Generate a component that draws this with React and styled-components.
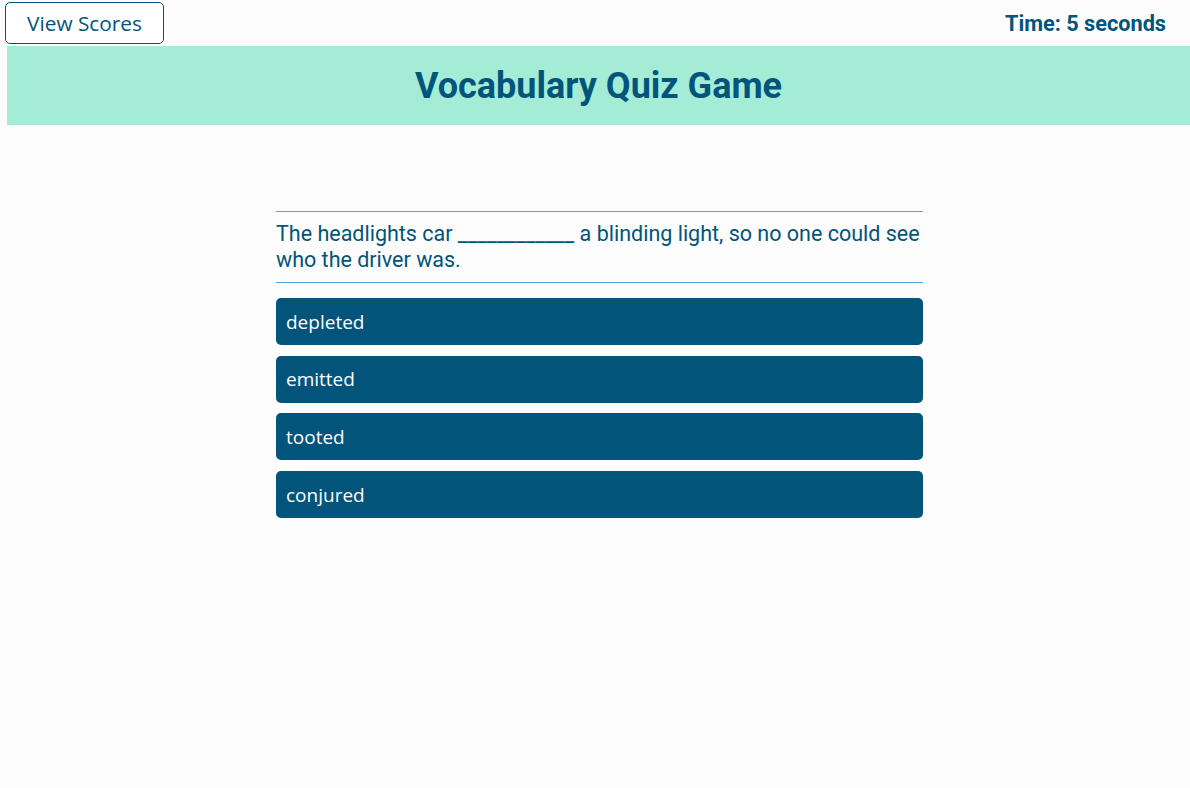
import React, { useState } from 'react'
import styled, { createGlobalStyle } from 'styled-components'

const Global = createGlobalStyle`
  body {
    margin: 0;
    background: #fdfdfd;
    font-family: Roboto, "Liberation Sans", sans-serif;
  }
`

const question = {
  text: 'The headlights car ____________ a blinding light, so no one could see who the driver was.',
  options: ['depleted', 'emitted', 'tooted', 'conjured'],
}

const App = () => {
  const [picked, setPicked] = useState(null)

  return (
    <>
      <Global />
      <TopBar>
        <ScoresButton>View Scores</ScoresButton>
        <Timer>Time: 5 seconds</Timer>
      </TopBar>
      <Page>
        <Banner>
          <Title>Vocabulary Quiz Game</Title>
        </Banner>
        <Quiz>
          <Question>{question.text}</Question>
          <Options>
            {question.options.map((opt) => (
              <Option key={opt} $active={picked === opt} onClick={() => setPicked(opt)}>
                {opt}
              </Option>
            ))}
          </Options>
        </Quiz>
      </Page>
    </>
  )
}

const TopBar = styled.div`
  height: 46px;
  display: flex;
  align-items: center;
  justify-content: space-between;
  padding: 0 24px 0 5px;
`

const ScoresButton = styled.button`
  width: 159px;
  height: 42px;
  background: #fff;
  border: 1px solid #02547a;
  border-radius: 5px;
  color: #02547a;
  font-family: "Open Sans", sans-serif;
  font-size: 20.8px;
  cursor: pointer;
`

const Timer = styled.div`
  color: #02547a;
  font-weight: 700;
  font-size: 21.7px;
`

const Page = styled.div`
  padding-left: 7px;
`

const Banner = styled.div`
  height: 79px;
  background: #a4ecd6;
  display: flex;
  align-items: center;
  justify-content: center;
`

const Title = styled.h1`
  margin: 0;
  color: #02547a;
  font-size: 36px;
  font-weight: 700;
`

const Quiz = styled.div`
  width: 647px;
  margin: 86px 0 0 269px;
`

const Question = styled.p`
  margin: 0;
  border-top: 1px solid #4aa8d4;
  border-bottom: 1px solid #4aa8d4;
  padding: 9px 0 9px;
  color: #02547a;
  font-size: 21.5px;
  line-height: 26px;
`

const Options = styled.div`
  display: flex;
  flex-direction: column;
  gap: 10.7px;
  margin-top: 15px;
`

const Option = styled.div`
  height: 47px;
  display: flex;
  align-items: center;
  padding: 0 10px;
  border-radius: 5px;
  background: ${(p) => (p.$active ? '#036a99' : '#02547a')};
  color: #fff;
  font-family: "Open Sans", sans-serif;
  font-size: 19px;
  cursor: pointer;
`

export default App
